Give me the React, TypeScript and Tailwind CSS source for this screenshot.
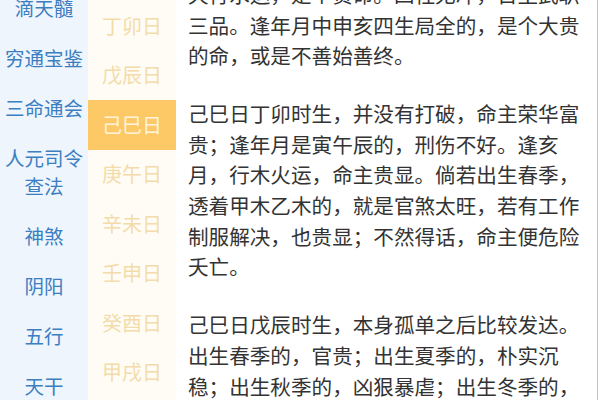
const navItems = [['滴天髓'], ['穷通宝鉴'], ['三命通会'], ['人元司令', '查法'], ['神煞'], ['阴阳'], ['五行'], ['天干']]

const days = ['丁卯日', '戊辰日', '己巳日', '庚午日', '辛未日', '壬申日', '癸酉日', '甲戌日']

const paragraphs = [
  ['天行水运，是个贵命。四柱无冲，日主武职', '三品。逢年月中申亥四生局全的，是个大贵', '的命，或是不善始善终。'],
  [
    '己巳日丁卯时生，并没有打破，命主荣华富',
    '贵；逢年月是寅午辰的，刑伤不好。逢亥',
    '月，行木火运，命主贵显。倘若出生春季，',
    '透着甲木乙木的，就是官煞太旺，若有工作',
    '制服解决，也贵显；不然得话，命主便危险',
    '夭亡。',
  ],
  ['己巳日戊辰时生，本身孤单之后比较发达。', '出生春季的，官贵；出生夏季的，朴实沉', '稳；出生秋季的，凶狠暴虐；出生冬季的，'],
]

export default function App() {
  return (
    <div
      className="flex w-[600px] h-[400px] overflow-hidden bg-white pr-[2px]"
      style={{ fontFamily: '"Noto Sans CJK SC", "Noto Sans", sans-serif' }}
    >
      {/* left nav */}
      <div className="w-[88px] shrink-0 bg-[#eef5fc] flex flex-col">
        <div className="mt-[-17px] flex flex-col">
          {navItems.map((item) => (
            <div key={item[0]} className="py-[11px] flex flex-col items-center text-[19.5px] leading-[28px] text-[#3b7ec2]">
              {item.map((t) => (
                <span key={t}>{t}</span>
              ))}
            </div>
          ))}
        </div>
      </div>

      {/* day list */}
      <div className="w-[88px] shrink-0 bg-[#fffcf6] flex flex-col">
        <div className="mt-[1px] flex flex-col">
          {days.map((d) => (
            <div
              key={d}
              className={
                d === '己巳日'
                  ? 'h-[49.5px] flex items-center justify-center text-[20px] bg-[#fdc866] text-[#fff3dc]'
                  : 'h-[49.5px] flex items-center justify-center text-[20px] text-[#f3dcaa]'
              }
            >
              {d}
            </div>
          ))}
        </div>
      </div>

      {/* content */}
      <div className="flex-1 pl-[12px] border-r border-[#c4c4c4]">
        <div className="mt-[-21px] flex flex-col gap-[27.5px]">
          {paragraphs.map((p, i) => (
            <div key={i} className="text-[20.6px] leading-[30.6px] text-[#333333]">
              {p.map((line) => (
                <div key={line} className="whitespace-nowrap">
                  {line}
                </div>
              ))}
            </div>
          ))}
        </div>
      </div>
    </div>
  )
}
